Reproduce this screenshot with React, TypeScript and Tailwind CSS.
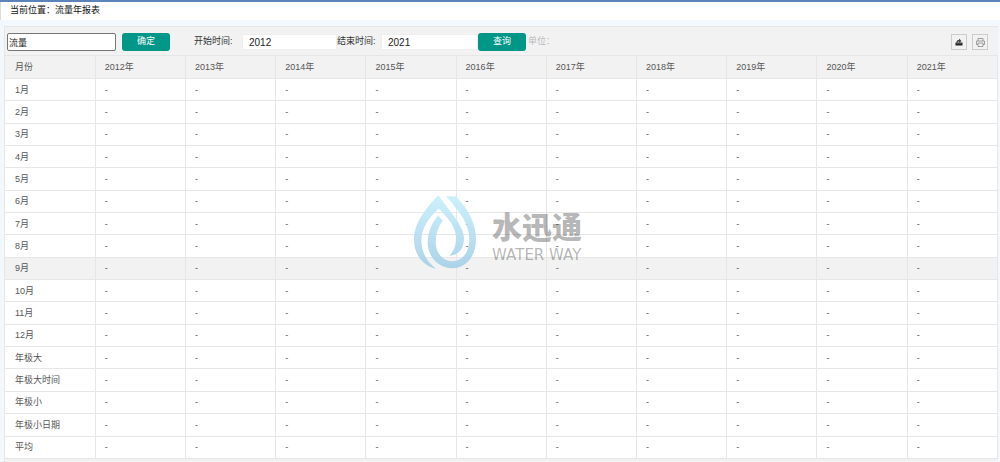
import { useState } from 'react';

const years = ['2012', '2013', '2014', '2015', '2016', '2017', '2018', '2019', '2020', '2021'];

const rows = [
  '1月', '2月', '3月', '4月', '5月', '6月', '7月', '8月', '9月', '10月', '11月', '12月',
  '年极大', '年极大时间', '年极小', '年极小日期', '平均',
];

function ExportIcon() {
  return (
    <svg viewBox="0 0 16 16" className="h-2 w-2" aria-hidden="true">
      <path d="M1 9h14v6H1z" fill="#222" />
      <path d="M3 9c0-4 2-5 5-5V1l5 5-5 4V7C6 7 5 8 5 10" fill="#444" />
      <path d="M3 11h10" stroke="#777" strokeWidth="1" />
    </svg>
  );
}

function PrintIcon() {
  return (
    <svg viewBox="0 0 18 18" className="h-[9px] w-[9px]" fill="none" stroke="#888" strokeWidth="1.6" aria-hidden="true">
      <path d="M4 6V1h10v5M4 13H1V6h16v7h-3" />
      <path d="M4 10h10v7H4z" />
    </svg>
  );
}

function Watermark() {
  return (
    <div className="pointer-events-none absolute top-[168px] left-[41.2%] flex items-center gap-4">
      <svg viewBox="12 15 186 221" className="h-[74px] w-[62px]" aria-hidden="true">
        <defs>
          <linearGradient id="drop" gradientUnits="userSpaceOnUse" x1="0" y1="15" x2="0" y2="236">
            <stop offset="0" stopColor="#c8effc" />
            <stop offset="1" stopColor="#a5cfe7" />
          </linearGradient>
        </defs>
        <g fill="url(#drop)" fillOpacity="0.92">
          <path d="M85 15C49 51 12 98 12 148C12 193 38 226 78 236C50 214 34 185 34 152C34 115 54 85 86 55C116 84 137 112 138 142C138 165 132 183 118 197C147 195 162 174 162 145C162 108 123 68 85 15Z" />
          <path d="M108 18H137C177 58 198 103 198 147C198 198 168 234 128 234C86 234 53 201 53 157C53 123 66 98 85 76L98 92C84 112 77 132 77 155C77 189 98 213 127 213C159 213 178 184 178 148C178 103 151 64 108 18Z" />
        </g>
      </svg>
      <div className="flex flex-col pt-2.5 text-black/30">
        <span className="font-['Noto_Sans_CJK_SC',sans-serif] text-[30px] leading-9 font-black">水迅通</span>
        <span className="font-['DejaVu_Sans',sans-serif] text-[15px] leading-6">WATER WAY</span>
      </div>
    </div>
  );
}

export default function App() {
  const [metric, setMetric] = useState('流量');
  const [start, setStart] = useState('2012');
  const [end, setEnd] = useState('2021');
  const button = 'h-[18px] w-12 shrink-0 rounded-[3px] bg-[#009688] text-[9px] text-white';
  const year = 'h-4 min-w-0 border border-[#eee] bg-white px-1.5 text-[10px] text-[#222] outline-none';
  const tool = 'flex h-4 w-4 items-center justify-center border border-[#ccc]';

  return (
    <div className="flex min-h-screen flex-col border-t-2 border-[#5b84b8] bg-[#f2f8fb] font-['Liberation_Sans','Noto_Sans_CJK_SC',sans-serif] text-[9px] text-[#555]">
      <header className="h-[18px] border-l border-[#ddd] bg-white pl-[9px] leading-4 text-[#111]">当前位置：流量年报表</header>
      <div className="flex grow">
        <div className="flex w-px flex-col pt-8" aria-hidden="true">
          <div className="h-[341px] bg-[#858585]" />
        </div>
        <main className="relative mt-1.5 mr-0.5 ml-1 min-w-0 grow border border-r-0 border-b-0 border-[#e6e6e6] bg-[#f2f2f2]">
          <form className="flex h-7 items-center pt-0.5 pr-2.5 pl-0.5" onSubmit={(e) => e.preventDefault()}>
            <input
              aria-label="指标"
              value={metric}
              onChange={(e) => setMetric(e.target.value)}
              className="h-[18px] w-[109px] rounded-[2px] border border-[#767676] bg-white pl-px text-[9px] text-[#222] outline-none"
            />
            <button type="submit" className={button + ' ml-1.5'}>确定</button>
            <label htmlFor="start" className="ml-6 w-12 shrink-0 text-[#333]">开始时间:</label>
            <input id="start" value={start} onChange={(e) => setStart(e.target.value)} className={year + ' w-[95px]'} />
            <label htmlFor="end" className="w-11 shrink-0 text-[#333]">结束时间:</label>
            <input id="end" value={end} onChange={(e) => setEnd(e.target.value)} className={year + ' w-[97px]'} />
            <button type="submit" className={button}>查询</button>
            <span className="ml-0.5 text-[#bbb]">单位：</span>
            <div className="ml-auto flex gap-[5px]">
              <button type="button" aria-label="导出" className={tool}><ExportIcon /></button>
              <button type="button" aria-label="打印" className={tool}><PrintIcon /></button>
            </div>
          </form>
          <table className="h-[404px] w-full table-fixed border-collapse bg-white leading-4">
            <thead>
              <tr className="h-[23px] bg-[#f2f2f2]">
                <th className="border border-l-0 border-[#e6e6e6] py-0 pr-0 pl-2.5 text-left font-normal">月份</th>
                {years.map((y) => (
                  <th key={y} className="border border-[#e6e6e6] py-0 pr-0 pl-[9px] text-left font-normal">{y}年</th>
                ))}
              </tr>
            </thead>
            <tbody>
              {rows.map((name) => (
                <tr key={name} className={name === '9月' ? 'bg-[#f2f2f2]' : 'bg-white'}>
                  <td className="border border-l-0 border-[#e6e6e6] py-0 pr-0 pl-2.5">{name}</td>
                  {years.map((y) => (
                    <td key={y} className="border border-[#e6e6e6] py-0 pr-0 pl-[9px]">-</td>
                  ))}
                </tr>
              ))}
            </tbody>
          </table>
          <Watermark />
        </main>
      </div>
    </div>
  );
}
